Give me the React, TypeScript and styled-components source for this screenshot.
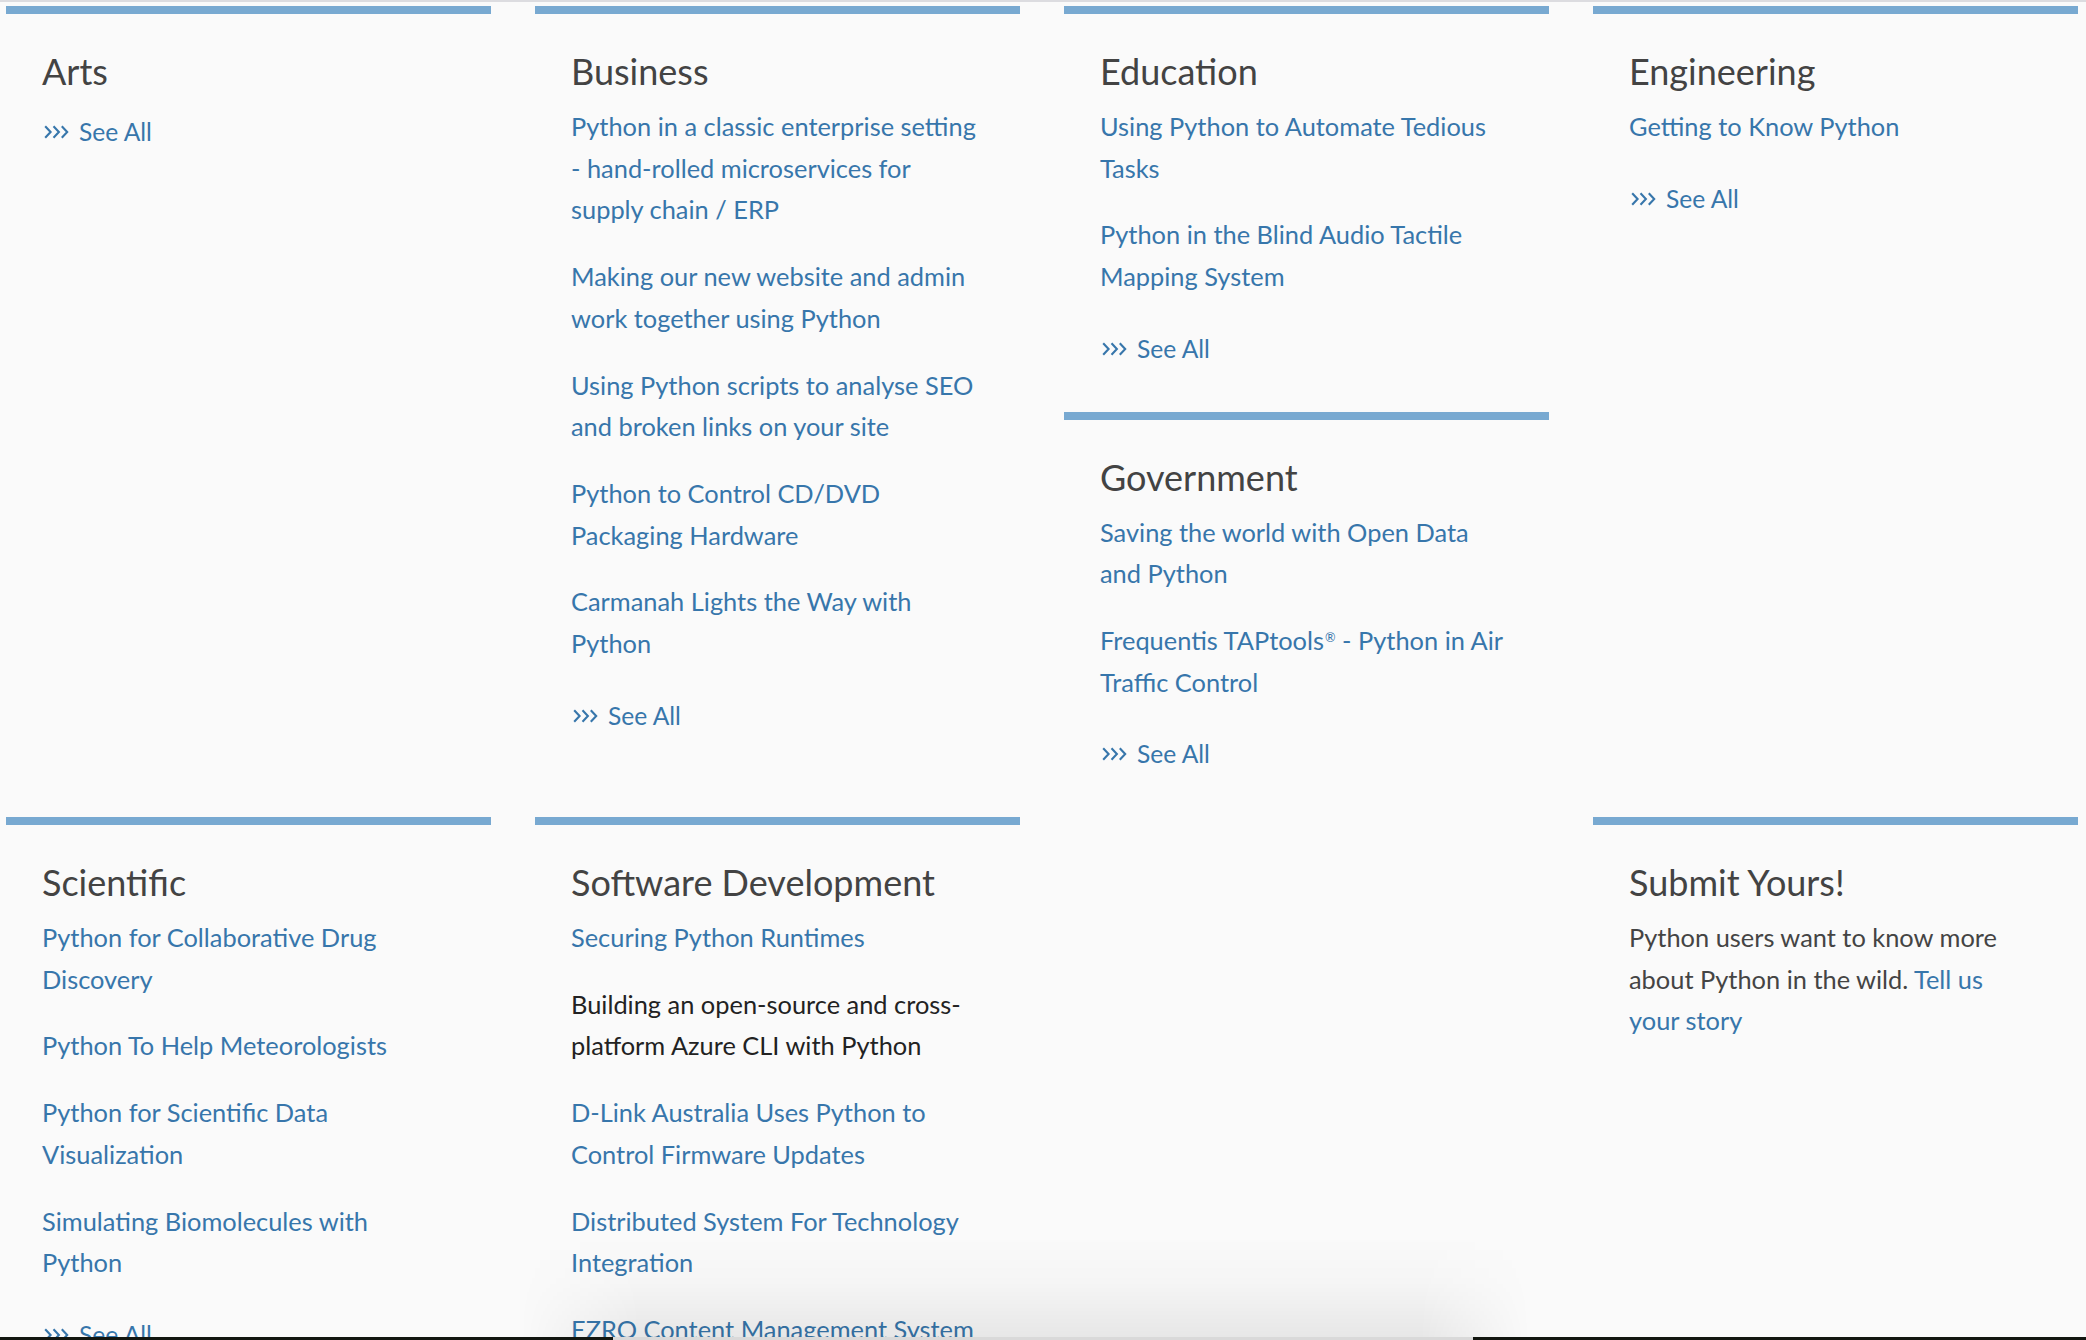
import React from "react";
import styled, { createGlobalStyle } from "styled-components";

const GlobalStyle = createGlobalStyle`
  html, body {
    margin: 0;
    padding: 0;
    background: #fafafa;
    overflow: hidden;
  }
  body {
    font-family: Lato, "Open Sans", sans-serif;
    -webkit-font-smoothing: antialiased;
  }
  * { box-sizing: border-box; }
`;

const LINK = "#3776ab";

const Page = styled.main`
  min-height: 1340px;
  background: #fafafa;
  border-top: 2px solid #dcdce0;
  padding: 4px 8px 0 6px;
`;

const Grid = styled.div`
  display: grid;
  grid-template-columns: repeat(4, 1fr);
  column-gap: 44px;
  row-gap: 0;
  align-items: start;
`;

const Stack = styled.div`
  display: flex;
  flex-direction: column;
`;

const Section = styled.section`
  border-top: 8px solid #78a9d1;
  padding: 35px 39px 42px 36px;
  display: flex;
  flex-direction: column;
`;

const Heading = styled.h2`
  margin: 0 0 12px;
  font-family: Lato, sans-serif;
  font-weight: 400;
  font-size: 36px;
  line-height: 45px;
  color: #434343;
  letter-spacing: 0;
`;

const ItemList = styled.ul`
  list-style: none;
  margin: 0 0 25px;
  padding: 0;
  display: flex;
  flex-direction: column;
  gap: 25px;
`;

const Item = styled.li<{ $plain?: boolean }>`
  font-size: 25.4px;
  line-height: 41.7px;
  color: ${(p) => (p.$plain ? "#222222" : LINK)};
`;

const Link = styled.a`
  color: ${LINK};
  text-decoration: none;
`;

const Reg = styled.sup`
  font-size: 0.5em;
  line-height: 0;
  vertical-align: 0.6em;
  margin-left: 1px;
`;

const SeeAll = styled.a`
  margin-top: 5px;
  display: flex;
  align-items: center;
  gap: 10px;
  font-size: 24.6px;
  line-height: 41.7px;
  color: ${LINK};
  text-decoration: none;
`;

const Chevrons = styled.svg`
  width: 25px;
  height: 14px;
  margin-left: 2px;
  flex: none;
`;

const Paragraph = styled.p`
  margin: 0;
  max-width: 400px;
  font-size: 25.4px;
  line-height: 41.7px;
  color: #444444;
`;

const ShadowOverlay = styled.div`
  position: fixed;
  left: 520px;
  bottom: 3px;
  width: 1010px;
  height: 100px;
  pointer-events: none;
  background: linear-gradient(
    to bottom,
    rgba(0, 0, 0, 0) 0%,
    rgba(0, 0, 0, 0.02) 45%,
    rgba(0, 0, 0, 0.075) 100%
  );
  -webkit-mask-image: linear-gradient(
    to right,
    transparent 0,
    #000 120px,
    #000 900px,
    transparent 1010px
  );
  mask-image: linear-gradient(
    to right,
    transparent 0,
    #000 120px,
    #000 900px,
    transparent 1010px
  );
`;

const BottomEdge = styled.div`
  position: fixed;
  left: 0;
  right: 0;
  bottom: 0;
  height: 3px;
  display: flex;
  pointer-events: none;
`;

const EdgePart = styled.div<{ $light?: boolean; $w?: string }>`
  height: 100%;
  flex: ${(p) => (p.$w ? `0 0 ${p.$w}` : "1 1 auto")};
  background: ${(p) => (p.$light ? "#d9d9d9" : "#121610")};
`;

type Entry = string | { text: string; plain?: boolean };

const ChevronIcon = () => (
  <Chevrons viewBox="0 0 25 14" aria-hidden="true">
    {[0, 8.3, 16.6].map((x) => (
      <polyline
        key={x}
        points={`${x + 1.2},1.2 ${x + 6.6},7 ${x + 1.2},12.8`}
        fill="none"
        stroke={LINK}
        strokeWidth="2.1"
        strokeLinecap="butt"
        strokeLinejoin="miter"
      />
    ))}
  </Chevrons>
);

const renderText = (t: string) => {
  if (!t.includes("®")) return t;
  const [a, b] = t.split("®");
  return (
    <>
      {a}
      <Reg>®</Reg>
      {b}
    </>
  );
};

const Category = ({ title, items, seeAll = true }: { title: string; items: Entry[]; seeAll?: boolean }) => (
  <Section>
    <Heading>{title}</Heading>
    {items.length > 0 && (
      <ItemList>
        {items.map((it, i) => {
          const e = typeof it === "string" ? { text: it } : it;
          return (
            <Item key={i} $plain={e.plain}>
              {e.plain ? renderText(e.text) : <Link href="#">{renderText(e.text)}</Link>}
            </Item>
          );
        })}
      </ItemList>
    )}
    {seeAll && (
      <SeeAll href="#">
        <ChevronIcon />
        See All
      </SeeAll>
    )}
  </Section>
);

export default function App() {
  return (
    <>
      <GlobalStyle />
      <Page>
        <Grid>
          <Category title="Arts" items={[]} />
          <Category
            title="Business"
            items={[
              "Python in a classic enterprise setting - hand-rolled microservices for supply chain / ERP",
              "Making our new website and admin work together using Python",
              "Using Python scripts to analyse SEO and broken links on your site",
              "Python to Control CD/DVD Packaging Hardware",
              "Carmanah Lights the Way with Python",
            ]}
          />
          <Stack>
            <Category
              title="Education"
              items={["Using Python to Automate Tedious Tasks", "Python in the Blind Audio Tactile Mapping System"]}
            />
            <Category
              title="Government"
              items={[
                "Saving the world with Open Data and Python",
                "Frequentis TAPtools® - Python in Air Traffic Control",
              ]}
            />
          </Stack>
          <Category title="Engineering" items={["Getting to Know Python"]} />

          <Category
            title="Scientific"
            items={[
              "Python for Collaborative Drug Discovery",
              "Python To Help Meteorologists",
              "Python for Scientific Data Visualization",
              "Simulating Biomolecules with Python",
            ]}
          />
          <Category
            title="Software Development"
            items={[
              "Securing Python Runtimes",
              { text: "Building an open-source and cross-platform Azure CLI with Python", plain: true },
              "D-Link Australia Uses Python to Control Firmware Updates",
              "Distributed System For Technology Integration",
              "EZRO Content Management System",
            ]}
          />
          <div />
          <Section>
            <Heading>Submit Yours!</Heading>
            <Paragraph>
              Python users want to know more about Python in the wild. <Link href="#">Tell us your story</Link>
            </Paragraph>
          </Section>
        </Grid>
      </Page>
      <ShadowOverlay />
      <BottomEdge>
        <EdgePart $w="613px" />
        <EdgePart $light $w="860px" />
        <EdgePart />
      </BottomEdge>
    </>
  );
}
